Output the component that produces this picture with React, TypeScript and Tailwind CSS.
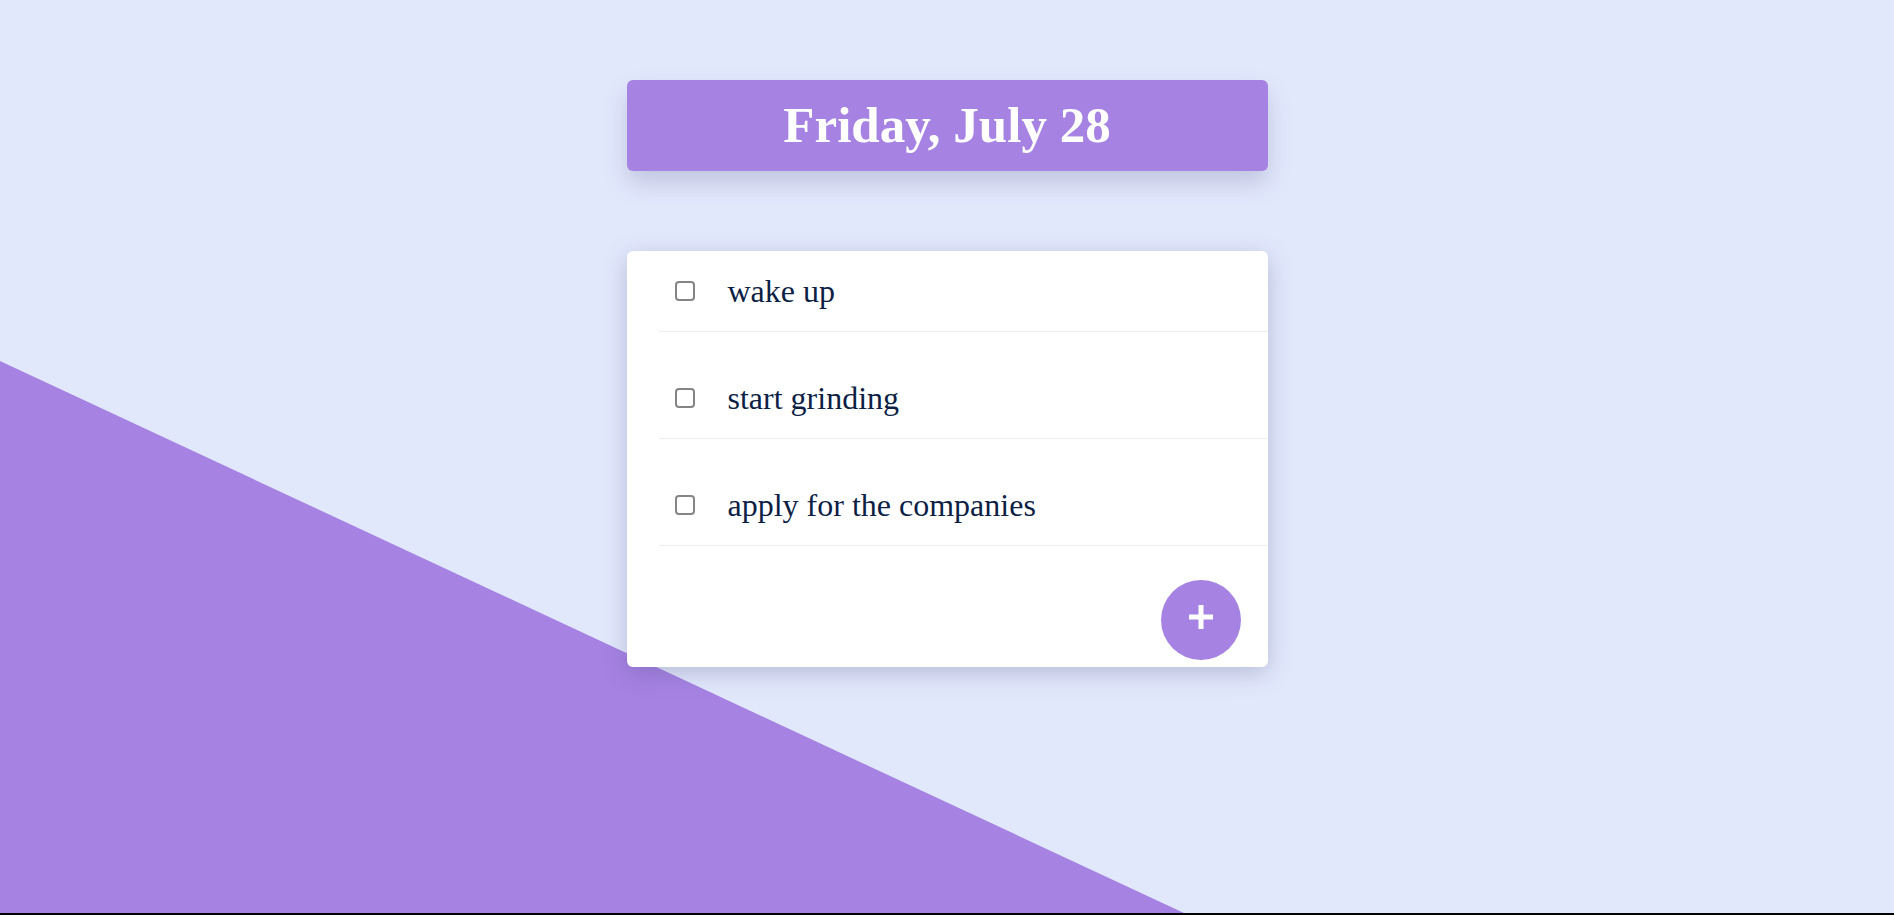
import { useState } from 'react'

interface Todo {
  id: number
  text: string
  done: boolean
}

const initialTodos: Todo[] = [
  { id: 1, text: 'wake up', done: false },
  { id: 2, text: 'start grinding', done: false },
  { id: 3, text: 'apply for the companies', done: false },
]

export default function App() {
  const [todos, setTodos] = useState<Todo[]>(initialTodos)

  const toggle = (id: number) => {
    setTodos((prev) => prev.map((t) => (t.id === id ? { ...t, done: !t.done } : t)))
  }

  return (
    <div className="h-[915px] bg-black">
      <div className="relative h-[913px] overflow-hidden bg-[#e2e8fc] font-['Liberation_Serif',serif]">
        {/* diagonal background shape */}
        <div className="absolute inset-0 bg-[#a683e3] [clip-path:polygon(0_361px,1184px_913px,0_913px)]"></div>

        <div className="relative flex flex-col items-center pt-[80px]">
          <div className="flex h-[91px] w-[641px] items-center justify-center rounded-md bg-[#a683e3] shadow-[0_12px_24px_rgba(60,60,110,0.2)]">
            <h1 className="text-[51px] font-bold leading-none text-white">Friday, July 28</h1>
          </div>

          <div className="mt-[80px] w-[641px] rounded-md bg-white shadow-[0_6px_24px_rgba(60,60,110,0.25)]">
            <ul className="pl-8">
              {todos.map((todo, index) => (
                <li
                  key={todo.id}
                  className={`flex h-[81px] items-center border-b border-[#ededed] ${index > 0 ? 'mt-[26px]' : ''}`}
                >
                  <input
                    type="checkbox"
                    checked={todo.done}
                    onChange={() => toggle(todo.id)}
                    className="ml-[16px] h-5 w-5 appearance-none rounded-[4px] border-2 border-[#858585] bg-white checked:bg-[#a683e3]"
                  />
                  <span className="ml-[33px] text-[32px] text-[#0d1f45]">{todo.text}</span>
                </li>
              ))}
            </ul>

            <div className="flex justify-end pt-[34px] pb-[7px] pr-[27px]">
              <button className="flex h-20 w-20 items-center justify-center rounded-full bg-[#a683e3]">
                <svg width="24" height="24" viewBox="0 0 24 24" className="mb-[6px]">
                  <rect x="0" y="9.5" width="24" height="5" fill="white" />
                  <rect x="9.5" y="0" width="5" height="24" fill="white" />
                </svg>
              </button>
            </div>
          </div>
        </div>
      </div>
    </div>
  )
}
